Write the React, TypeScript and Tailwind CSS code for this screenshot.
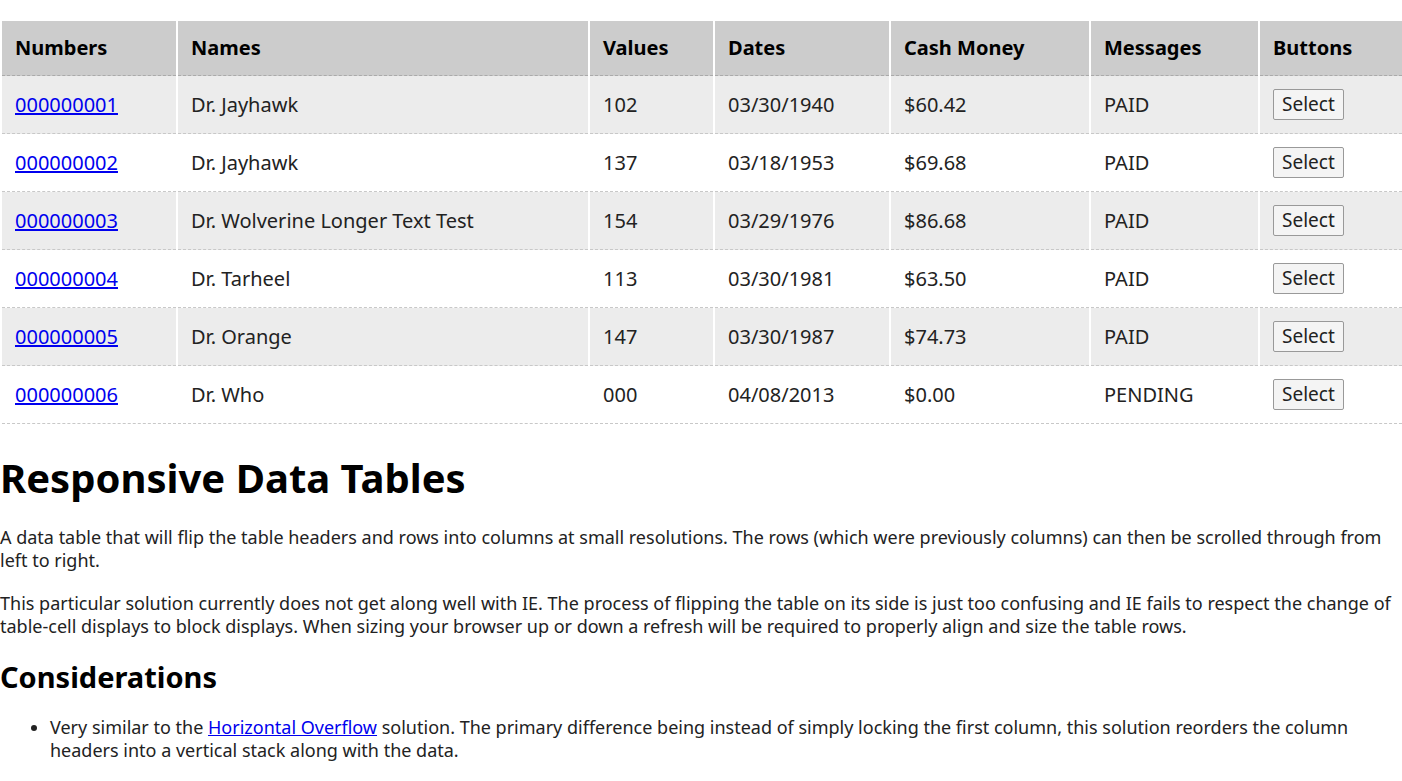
const rows = [
  ["000000001", "Dr. Jayhawk", "102", "03/30/1940", "$60.42", "PAID"],
  ["000000002", "Dr. Jayhawk", "137", "03/18/1953", "$69.68", "PAID"],
  ["000000003", "Dr. Wolverine Longer Text Test", "154", "03/29/1976", "$86.68", "PAID"],
  ["000000004", "Dr. Tarheel", "113", "03/30/1981", "$63.50", "PAID"],
  ["000000005", "Dr. Orange", "147", "03/30/1987", "$74.73", "PAID"],
  ["000000006", "Dr. Who", "000", "04/08/2013", "$0.00", "PENDING"],
];
const heads = ["Numbers", "Names", "Values", "Dates", "Cash Money", "Messages", "Buttons"];
const widths = ["w-[174px]", "w-[410px]", "w-[123px]", "w-[174px]", "w-[198px]", "w-[167px]", "w-[142px]"];

export default function App() {
  return (
    <div className="bg-white text-[#222] [font-family:'Liberation_Sans',Arial,sans-serif]">
      <div className="pt-[21px]">
        <table className="border-separate border-spacing-x-[2px] border-spacing-y-0 w-[1404px] table-fixed text-[20px]">
          <thead>
            <tr>
              {heads.map((h, i) => (
                <th key={h} className={`${widths[i]} bg-[#cccccc] h-[55px] text-left pl-[13px] font-bold text-black border-b border-dashed border-[#aaa]`}>{h}</th>
              ))}
            </tr>
          </thead>
          <tbody>
            {rows.map((r, ri) => (
              <tr key={ri}>
                {r.map((c, ci) => (
                  <td key={ci} className={`h-[58px] pl-[13px] border-b border-dashed border-[#c8c8c8] ${ri % 2 === 0 ? "bg-[#ececec]" : "bg-white"}`}>
                    {ci === 0 ? <a href="#" className="text-[#0000ee] underline">{c}</a> : c}
                  </td>
                ))}
                <td className={`h-[58px] pl-[13px] border-b border-dashed border-[#c8c8c8] ${ri % 2 === 0 ? "bg-[#ececec]" : "bg-white"}`}>
                  <button className="border border-[#999] bg-[#f4f4f4] rounded-[2px] px-[8px] h-[31px] text-[19px] leading-none text-[#222]">Select</button>
                </td>
              </tr>
            ))}
          </tbody>
        </table>
      </div>
      <h1 className="text-[40px] font-bold leading-[46px] mt-[31px] text-black">Responsive Data Tables</h1>
      <p className="text-[18px] leading-[23px] mt-[25px]">A data table that will flip the table headers and rows into columns at small resolutions. The rows (which were previously columns) can then be scrolled through from left to right.</p>
      <p className="text-[18px] leading-[23px] mt-[20px]">This particular solution currently does not get along well with IE. The process of flipping the table on its side is just too confusing and IE fails to respect the change of table-cell displays to block displays. When sizing your browser up or down a refresh will be required to properly align and size the table rows.</p>
      <h2 className="text-[29px] font-bold leading-[34px] mt-[22px] text-black">Considerations</h2>
      <ul className="list-disc pl-[50px] mt-[22px] text-[18px] leading-[23px]">
        <li>Very similar to the <a href="#" className="text-[#0000ee] underline">Horizontal Overflow</a> solution. The primary difference being instead of simply locking the first column, this solution reorders the column headers into a vertical stack along with the data.</li>
      </ul>
    </div>
  );
}
